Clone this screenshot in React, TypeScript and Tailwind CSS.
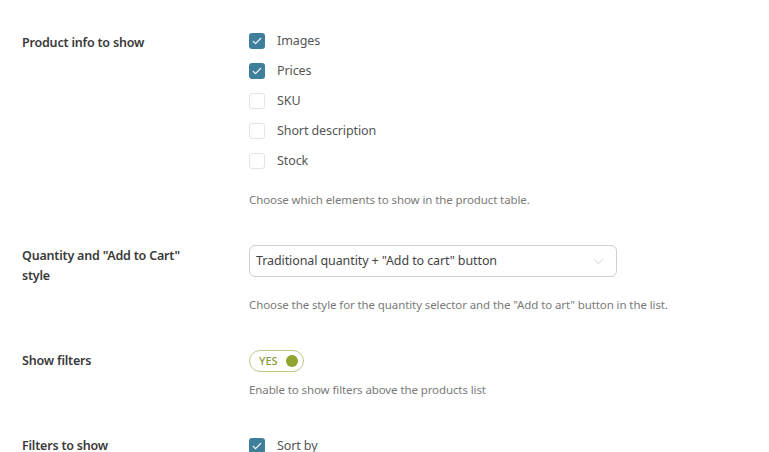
import React from 'react';

const font = { fontFamily: '"Noto Sans", "Open Sans", sans-serif' };

const Check = ({ checked, label }: { checked: boolean; label: string }) => (
  <div className="flex items-center h-[30px]">
    <span
      className={`w-4 h-4 rounded-[3px] flex items-center justify-center ${
        checked ? 'bg-[#3f7f9b]' : 'border border-[#e4e4e4] bg-white'
      }`}
    >
      {checked && (
        <svg viewBox="0 0 16 16" className="w-3 h-3" fill="none" stroke="white" strokeWidth="1.6" strokeLinecap="round" strokeLinejoin="round">
          <path d="M3 8.5l3 3 7-7" />
        </svg>
      )}
    </span>
    <span className="ml-3 text-[12.5px] tracking-[-0.1px] text-[#555]">{label}</span>
  </div>
);

const Row: React.FC<{ label: React.ReactNode; className?: string; children: React.ReactNode }> = ({ label, className, children }) => (
  <div className={`flex ${className ?? ''}`}>
    <div className="w-[227px] shrink-0 text-[12.5px] tracking-[-0.2px] font-semibold text-[#3a3a3a] leading-5">{label}</div>
    <div className="flex-1">{children}</div>
  </div>
);

export default function App() {
  return (
    <div className="w-[769px] h-[452px] bg-white overflow-hidden px-[22px] pt-[26px]" style={font}>
      <Row label={<div className="pt-[7px]">Product info to show</div>}>
        <Check checked label="Images" />
        <Check checked label="Prices" />
        <Check checked={false} label="SKU" />
        <Check checked={false} label="Short description" />
        <Check checked={false} label="Stock" />
        <p className="mt-[14px] text-[11.5px] tracking-[-0.1px] leading-5 text-[#7a7a7a]">Choose which elements to show in the product table.</p>
      </Row>

      <Row className="mt-[35px]" label={<div className="pt-px">Quantity and "Add to Cart"<br />style</div>}>
        <div className="w-[368px] h-8 border border-[#cfcfcf] rounded-md flex items-center justify-between pl-[6px] pr-3 text-[12.5px] tracking-[-0.1px] text-[#444]">
          <span>Traditional quantity + "Add to cart" button</span>
          <svg viewBox="0 0 12 8" className="w-[11px] h-[7px]" fill="none" stroke="#c8c8c8" strokeWidth="1">
            <path d="M1 1.5l5 5 5-5" />
          </svg>
        </div>
        <p className="mt-[18px] text-[11.5px] tracking-[-0.1px] leading-5 text-[#7a7a7a]">Choose the style for the quantity selector and the "Add to art" button in the list.</p>
      </Row>

      <Row className="mt-[35px]" label={<div className="pt-px">Show filters</div>}>
        <div className="w-[55px] h-[22px] rounded-full border border-[#b9c98a] flex items-center justify-between pl-[9px] pr-[5px]">
          <span className="text-[11px] font-medium text-[#8a9b3c]">YES</span>
          <span className="w-3 h-3 rounded-full bg-[#8fa52e]" />
        </div>
        <p className="mt-2 text-[11.5px] tracking-[-0.1px] leading-5 text-[#7a7a7a]">Enable to show filters above the products list</p>
      </Row>

      <Row className="mt-[31px]" label={<div className="pt-[5px]">Filters to show</div>}>
        <Check checked label="Sort by" />
      </Row>
    </div>
  );
}
